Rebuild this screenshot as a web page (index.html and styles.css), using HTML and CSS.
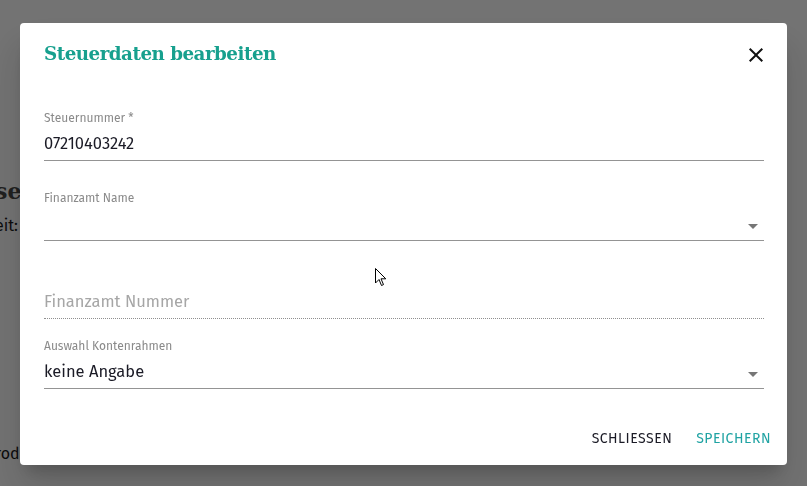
FILE: index.html
```html
<!DOCTYPE html>
<html lang="de">
<head>
  <meta charset="UTF-8">
  <meta name="viewport" content="width=device-width, initial-scale=1.0">
  <title>Steuerdaten bearbeiten</title>
  <link rel="stylesheet" href="styles.css">
</head>
<body>
  <!-- page behind the dialog, only its left edge shows -->
  <main class="page">
    <h1 class="page-title">se:</h1>
    <p class="page-line">eit:</p>
    <p class="page-line page-foot">rod</p>
  </main>

  <div class="overlay">
    <div class="dialog" role="dialog" aria-labelledby="dlg-title">
      <header class="dialog-head">
        <h2 id="dlg-title">Steuerdaten bearbeiten</h2>
        <button class="icon-btn" aria-label="Schließen">
          <svg viewBox="0 0 24 24" width="24" height="24">
            <path d="M19 6.41L17.59 5 12 10.59 6.41 5 5 6.41 10.59 12 5 17.59 6.41 19 12 13.41 17.59 19 19 17.59 13.41 12z"></path>
          </svg>
        </button>
      </header>

      <div class="dialog-body">
        <div class="field">
          <label class="field-label">Steuernummer *</label>
          <div class="field-input">07210403242</div>
        </div>

        <div class="field field-office">
          <label class="field-label">Finanzamt Name</label>
          <div class="field-input field-select"><span class="arrow"></span></div>
        </div>

        <div class="field field-disabled">
          <label class="field-label">&nbsp;</label>
          <div class="field-input placeholder">Finanzamt Nummer</div>
        </div>

        <div class="field">
          <label class="field-label">Auswahl Kontenrahmen</label>
          <div class="field-input field-select">keine Angabe<span class="arrow"></span></div>
        </div>
      </div>

      <footer class="dialog-actions">
        <button class="text-btn">Schliessen</button>
        <button class="text-btn primary">Speichern</button>
      </footer>
    </div>

    <svg class="cursor" viewBox="0 0 12 19" width="12" height="19">
      <path d="M0.5 0.5 L0.5 15 L4 11.5 L6.5 17.5 L8.5 16.6 L6 10.8 L10.8 10.8 Z" fill="#fff" stroke="#000" stroke-width="1"></path>
    </svg>
  </div>
</body>
</html>
```

FILE: styles.css
```css
:root {
  --teal: #17a08e;
  --text-color: #1b1b26;
  --label-color: #8a8a8a;
  --line-color: #949494;
}

* {
  margin: 0;
  padding: 0;
  box-sizing: border-box;
}

body {
  font-family: "Fira Sans", "Noto Sans", sans-serif;
  background-color: #f5f5f5;
  color: var(--text-color);
  height: 100vh;
  overflow: hidden;
}

/* background page */
.page {
  margin-left: -5px;
  padding-top: 176px;
}

.page-title {
  font-family: "DejaVu Serif", serif;
  font-size: 22px;
  line-height: 30px;
  color: #444;
  margin-bottom: 10px;
}

.page-line {
  font-size: 16px;
  color: #1a1a1a;
}

.page-foot {
  margin-top: 209px;
}

/* overlay + dialog */
.overlay {
  position: fixed;
  inset: 0;
  background-color: rgba(0, 0, 0, 0.53);
  display: flex;
  justify-content: center;
  align-items: flex-start;
  padding: 23px 20px 0;
}

.dialog {
  width: 100%;
  height: 442px;
  background-color: #fff;
  border-radius: 4px;
  box-shadow: 0 11px 15px -7px rgba(0, 0, 0, 0.2), 0 24px 38px 3px rgba(0, 0, 0, 0.14);
  display: flex;
  flex-direction: column;
}

.dialog-head {
  display: flex;
  align-items: center;
  justify-content: space-between;
  padding: 16px 19px 0 24px;
}

.dialog-head h2 {
  font-family: "DejaVu Serif", serif;
  font-weight: 700;
  font-size: 18.3px;
  line-height: 30px;
  color: var(--teal);
  letter-spacing: -0.5px;
}

.icon-btn {
  border: none;
  background: none;
  width: 24px;
  height: 24px;
  margin-top: 2px;
  cursor: pointer;
}

.icon-btn svg {
  display: block;
  fill: #111;
}

.dialog-body {
  padding: 41px 23px 0 24px;
  flex: 1;
}

.field {
  margin-bottom: 29px;
}

.field-office {
  margin-bottom: 27px;
}

.field-disabled {
  margin-bottom: 19px;
}

.field:last-child {
  margin-bottom: 0;
}

.field-label {
  display: block;
  font-size: 12px;
  line-height: 16px;
  color: var(--label-color);
}

.field-input {
  position: relative;
  margin-top: 6px;
  font-size: 16.5px;
  line-height: 24px;
  height: 29px;
  border-bottom: 1px solid var(--line-color);
}

.field-input.placeholder {
  color: #a6a6a6;
  border-bottom: 1px dotted #8f8f8f;
}

.arrow {
  position: absolute;
  right: 6px;
  top: 12px;
  width: 0;
  height: 0;
  border-left: 5px solid transparent;
  border-right: 5px solid transparent;
  border-top: 5px solid #767676;
}

.dialog-actions {
  display: flex;
  justify-content: flex-end;
  gap: 8px;
  padding: 8px;
}

.text-btn {
  font-family: inherit;
  font-size: 14px;
  line-height: 36px;
  text-transform: uppercase;
  letter-spacing: 0.5px;
  background: none;
  border: none;
  padding: 0 8px;
  color: var(--text-color);
  cursor: pointer;
}

.text-btn.primary {
  color: #20a3a3;
}

.cursor {
  position: absolute;
  left: 375px;
  top: 268px;
}
```
